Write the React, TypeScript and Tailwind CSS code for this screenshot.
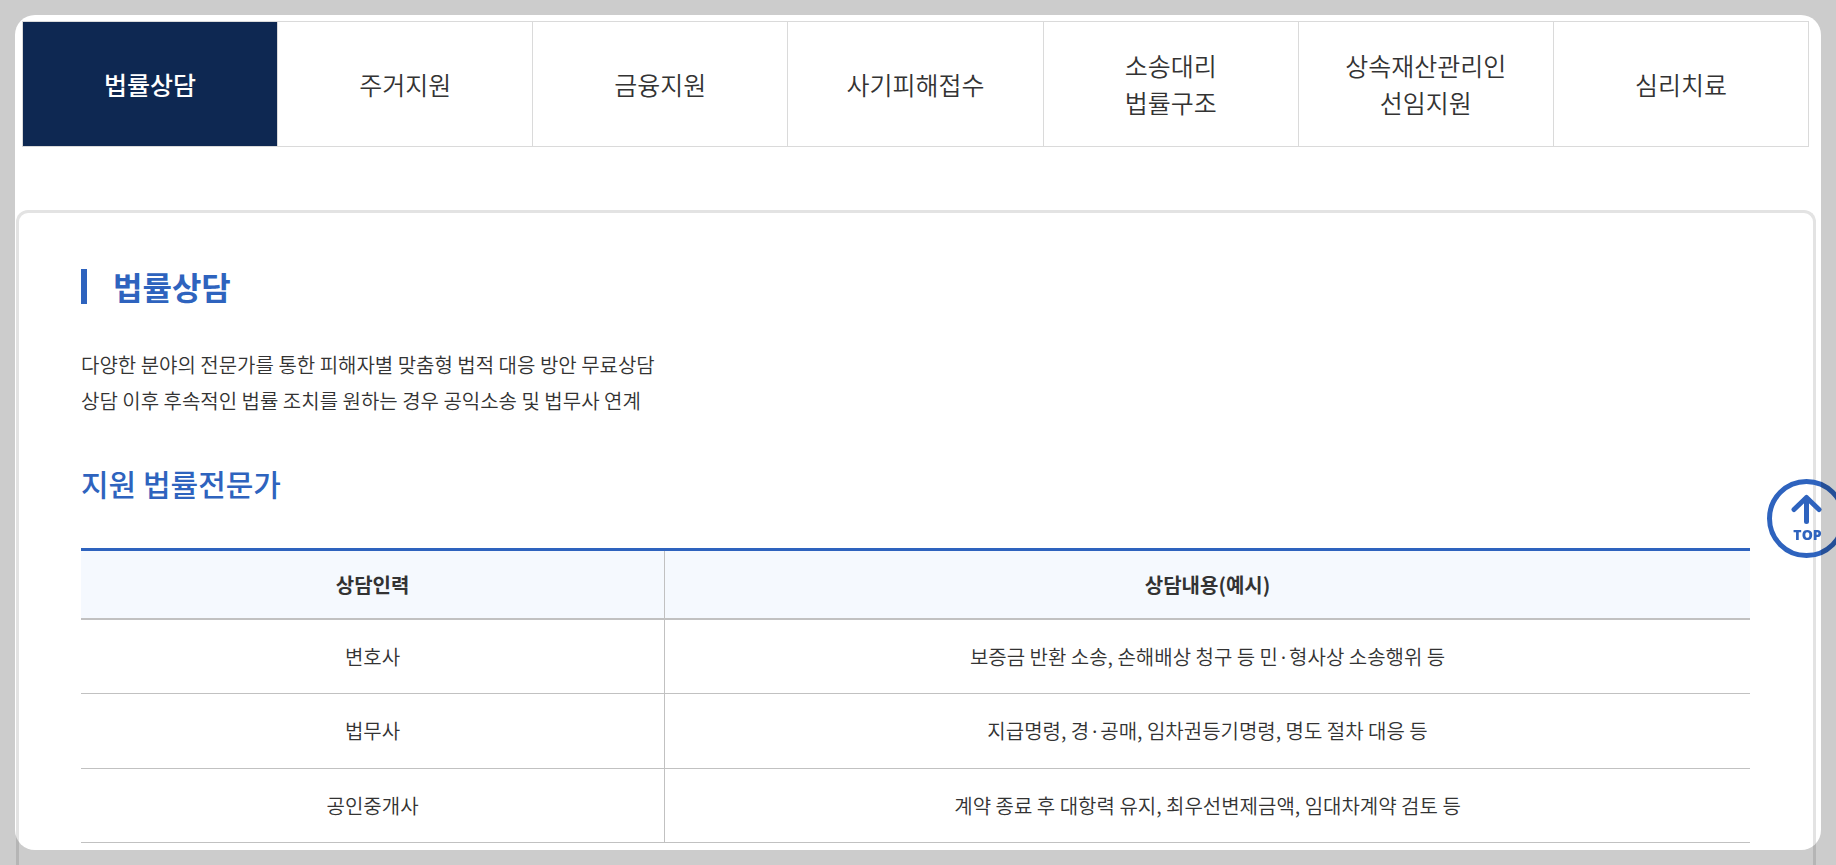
import { useState } from 'react'
import clsx from 'clsx'

const tabs = [
  ['법률상담'],
  ['주거지원'],
  ['금융지원'],
  ['사기피해접수'],
  ['소송대리', '법률구조'],
  ['상속재산관리인', '선임지원'],
  ['심리치료'],
]

const experts = [
  { role: '변호사', detail: '보증금 반환 소송, 손해배상 청구 등 민·형사상 소송행위 등' },
  { role: '법무사', detail: '지급명령, 경·공매, 임차권등기명령, 명도 절차 대응 등' },
  { role: '공인중개사', detail: '계약 종료 후 대항력 유지, 최우선변제금액, 임대차계약 검토 등' },
]

function TabMenu() {
  const [active, setActive] = useState(0)

  return (
    <nav className="ml-[22px] mr-[27px] flex h-[126px] border border-r-0 border-[#dadada]">
      {tabs.map((lines, idx) => (
        <button
          key={idx}
          onClick={() => setActive(idx)}
          className={clsx(
            'flex-1 border-r border-[#dadada] text-[25px] leading-[37px]',
            active === idx ? 'bg-[#0e2852] font-medium text-white' : 'bg-white',
          )}
        >
          {lines.map((line) => (
            <span key={line} className="block">
              {line}
            </span>
          ))}
        </button>
      ))}
    </nav>
  )
}

function ExpertTable() {
  return (
    <table className="w-full table-fixed border-separate border-spacing-0 border-t-3 border-[#2e63be] text-center text-xl">
      <thead>
        <tr className="h-[69px] bg-[#f5f9fe]">
          <th className="w-[35%] border-r border-b-2 border-[#c1c1c1] font-bold">상담인력</th>
          <th className="border-b-2 border-[#c1c1c1] font-bold">상담내용(예시)</th>
        </tr>
      </thead>
      <tbody>
        {experts.map(({ role, detail }) => (
          <tr key={role} className="h-[74px] even:h-[75px]">
            <td className="border-r border-b border-[#c1c1c1]">{role}</td>
            <td className="border-b border-[#c1c1c1]">{detail}</td>
          </tr>
        ))}
      </tbody>
    </table>
  )
}

function TopButton() {
  return (
    <button
      aria-label="TOP"
      className="fixed top-[479px] -right-2.5 h-[79px] w-[79px] text-[#2e63be]"
      onClick={() => window.scrollTo({ top: 0 })}
    >
      <svg viewBox="0 0 79 79" className="absolute inset-0" fill="none" stroke="currentColor">
        <circle cx="39.5" cy="39.5" r="37" strokeWidth="5" />
        <path d="M39.5 42.5V18.5M27 30.5l12.5-12L52 30.5" strokeWidth="5" strokeLinecap="round" strokeLinejoin="round" />
      </svg>
      <span className="absolute inset-x-0 top-12 pl-0.5 font-['Open_Sans',sans-serif] text-sm leading-4 font-extrabold">
        TOP
      </span>
    </button>
  )
}

export default function App() {
  return (
    <div className="flex min-h-screen flex-col overflow-hidden bg-white pt-[21px] font-['Noto_Sans_CJK_KR',sans-serif] font-[350] text-[#333333]">
      <TabMenu />

      <main className="mt-[63px] mr-5 ml-4 flex-1 rounded-t-xl border-3 border-b-0 border-[#e3e3e3] pr-[63px] pl-[62px] pt-14">
        <h2 className="flex h-[35px] items-center border-l-6 border-[#2e63be] pb-0.5 pl-[26px] text-[32px] font-bold text-[#2e63be]">
          법률상담
        </h2>
        <p className="mt-[43px] text-xl leading-9">
          다양한 분야의 전문가를 통한 피해자별 맞춤형 법적 대응 방안 무료상담
          <br />
          상담 이후 후속적인 법률 조치를 원하는 경우 공익소송 및 법무사 연계
        </p>
        <h3 className="mt-[43px] mb-11 text-[30px] leading-[42px] font-medium text-[#2e63be]">지원 법률전문가</h3>
        <ExpertTable />
      </main>

      <TopButton />

      {/* Dimmed frame around the page */}
      <div className="pointer-events-none fixed inset-[15px] rounded-[20px] shadow-[0_0_0_100px_rgba(0,0,0,0.2)]" />
    </div>
  )
}
